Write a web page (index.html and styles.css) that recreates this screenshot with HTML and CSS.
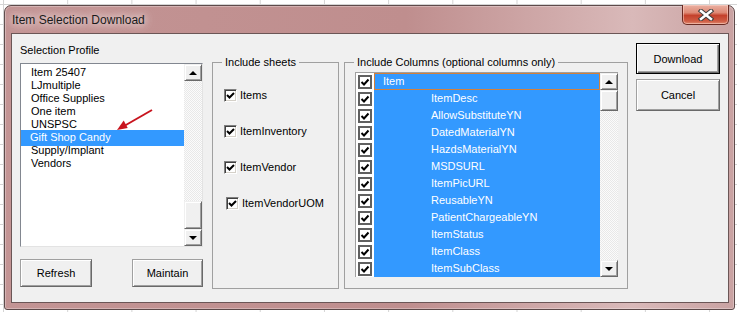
FILE: index.html
```html
<!DOCTYPE html>
<html lang="en">
<head>
  <meta charset="UTF-8">
  <title>Item Selection Download</title>
  <link rel="stylesheet" href="styles.css">
</head>
<body>
  <div class="window">
    <div class="titlebar">
      <span class="title">Item Selection Download</span>
      <button class="close" title="Close">
        <svg width="18" height="12" viewBox="0 0 18 12">
          <path d="M4 2 L14 10 M14 2 L4 10" stroke="#3c3c3c" stroke-width="4.5" stroke-linecap="square"/>
          <path d="M4 2 L14 10 M14 2 L4 10" stroke="#fff" stroke-width="2.5" stroke-linecap="square"/>
        </svg>
      </button>
    </div>

    <div class="client">
      <div class="profile">
        <div class="caption">Selection Profile</div>
        <div class="listbox">
          <ul class="profiles">
            <li>Item 25407</li>
            <li>LJmultiple</li>
            <li>Office Supplies</li>
            <li>One item</li>
            <li>UNSPSC</li>
            <li class="selected">Gift Shop Candy</li>
            <li>Supply/Implant</li>
            <li>Vendors</li>
          </ul>
          <div class="vscroll">
            <span class="sb-btn up"></span>
            <span class="sb-track"></span>
            <span class="sb-thumb tall"></span>
            <span class="sb-btn down"></span>
          </div>
          <svg class="pointer" width="50" height="36" viewBox="0 0 50 36">
            <line x1="42" y1="7" x2="15" y2="22.5" stroke="#c8141e" stroke-width="2"/>
            <polygon points="7,27 17.7,25 13.7,17.5" fill="#c8141e"/>
          </svg>
        </div>
        <div class="profile-actions">
          <button class="btn refresh">Refresh</button>
          <button class="btn maintain">Maintain</button>
        </div>
      </div>

      <fieldset class="frame sheets">
        <legend>Include sheets</legend>
        <div class="sheet-list">
          <label class="sheet"><span class="check"></span>Items</label>
          <label class="sheet"><span class="check"></span>ItemInventory</label>
          <label class="sheet"><span class="check"></span>ItemVendor</label>
          <label class="sheet shifted"><span class="check"></span>ItemVendorUOM</label>
        </div>
      </fieldset>

      <fieldset class="frame columns">
        <legend>Include Columns (optional columns only)</legend>
        <div class="col-wrap">
          <div class="col-list">
            <ul class="col-rows">
              <li class="parent focus"><span class="box"></span><span class="name">Item</span></li>
              <li><span class="box"></span><span class="name">ItemDesc</span></li>
              <li><span class="box"></span><span class="name">AllowSubstituteYN</span></li>
              <li><span class="box"></span><span class="name">DatedMaterialYN</span></li>
              <li><span class="box"></span><span class="name">HazdsMaterialYN</span></li>
              <li><span class="box"></span><span class="name">MSDSURL</span></li>
              <li><span class="box"></span><span class="name">ItemPicURL</span></li>
              <li><span class="box"></span><span class="name">ReusableYN</span></li>
              <li><span class="box"></span><span class="name">PatientChargeableYN</span></li>
              <li><span class="box"></span><span class="name">ItemStatus</span></li>
              <li><span class="box"></span><span class="name">ItemClass</span></li>
              <li><span class="box"></span><span class="name">ItemSubClass</span></li>
            </ul>
            <div class="vscroll">
              <span class="sb-btn up"></span>
              <span class="sb-thumb"></span>
              <span class="sb-track"></span>
              <span class="sb-btn down"></span>
            </div>
          </div>
        </div>
      </fieldset>

      <div class="actions">
        <button class="btn default">Download</button>
        <button class="btn cancel">Cancel</button>
      </div>
    </div>
  </div>
</body>
</html>
```

FILE: styles.css
```css
body {
  margin: 0;
  font: 11px "Liberation Sans", Arial, sans-serif;
  color: #000;
  background-color: #fff;
  background-image:
    linear-gradient(to right, #d4d4d4 1px, transparent 1px),
    linear-gradient(#d4d4d4 1px, transparent 1px);
  background-size: 64.2px 20px;
  background-position: 3px 4px;
  height: 312px;
  overflow: hidden;
}

/* window chrome */
.window {
  width: 731px;
  height: 305px;
  margin: 5px 0 0 4px;
  box-sizing: border-box;
  border: 1px solid #5e4a4a;
  border-radius: 7px 7px 3px 3px;
  background: linear-gradient(to right, #c39494 0%, #bf8e8e 55%, #d9b9b9 86%, #c9a2a2 100%);
  box-shadow: inset 0 0 0 1px rgba(255, 255, 255, .3);
  display: flex;
  flex-direction: column;
}
.titlebar {
  height: 27px;
  display: flex;
  align-items: center;
  justify-content: space-between;
  padding: 0 5px 0 7px;
}
.title {
  font-size: 12px;
  color: #1a1a1a;
  text-shadow: 0 0 6px #ead9d9, 0 0 10px #ead9d9, 0 0 14px #e2cccc;
}
.close {
  align-self: flex-start;
  margin-top: -1px;
  width: 47px;
  height: 20px;
  padding: 0;
  border: 1px solid #6a2a22;
  border-top: 0;
  border-radius: 0 0 5px 5px;
  background: linear-gradient(#eab0a2 0%, #de8a76 40%, #c4412c 55%, #cf5c44 85%, #e08a70 100%);
  box-shadow: inset 0 0 0 1px rgba(255, 220, 210, .5);
  display: flex;
  align-items: center;
  justify-content: center;
}
.client {
  flex: 1;
  margin: 0 5px 6px 6px;
  border: 1px solid #6b5656;
  background: #f0f0f0;
  display: flex;
  align-items: flex-start;
  padding: 0 8px;
}

/* shared controls */
.btn {
  font: inherit;
  color: #000;
  padding: 0;
  box-sizing: border-box;
  background: #f0f0f0;
  border: 1px solid #a0a0a0;
  border-right-color: #696969;
  border-bottom-color: #696969;
  box-shadow: inset 1px 1px #fff, inset -1px -1px #a0a0a0;
}
.vscroll {
  width: 18px;
  display: flex;
  flex-direction: column;
  flex-shrink: 0;
}
.sb-btn, .sb-thumb {
  box-sizing: border-box;
  background: #f0f0f0;
  border: 1px solid;
  border-color: #f0f0f0 #696969 #696969 #f0f0f0;
  box-shadow: inset 1px 1px #fff, inset -1px -1px #a0a0a0;
}
.sb-btn {
  height: 17px;
  display: flex;
  align-items: center;
  justify-content: center;
}
.sb-btn.up::after {
  content: "";
  border: 4px solid transparent;
  border-top: 0;
  border-bottom: 4px solid #000;
}
.sb-btn.down::after {
  content: "";
  border: 4px solid transparent;
  border-bottom: 0;
  border-top: 4px solid #000;
}
.sb-thumb { height: 21px; }
.sb-thumb.tall { height: 28px; }
.sb-track {
  flex: 1;
  background: repeating-conic-gradient(#e8e8e8 0 25%, #fbfbfb 0 50%) 0 0 / 2px 2px;
}

/* selection profile */
.profile {
  width: 183px;
  margin-top: 10px;
}
.caption { line-height: 13px; }
.listbox {
  position: relative;
  margin-top: 6px;
  height: 184px;
  box-sizing: border-box;
  background: #fff;
  border: 1px solid #828790;
  border-right-color: #e3e3e3;
  border-bottom-color: #e3e3e3;
  display: flex;
}
.profiles {
  flex: 1;
  list-style: none;
  margin: 0;
  padding: 2px 0 0;
}
.profiles li {
  height: 13px;
  line-height: 13px;
  padding-left: 10px;
}
.profiles li.selected {
  background: #3399ff;
  color: #fff;
  padding-left: 9px;
  box-shadow: 0 -1px 0 #3399ff, 0 2px 0 #3399ff;
}
.pointer {
  position: absolute;
  left: 89px;
  top: 39px;
}
.profile-actions {
  margin-top: 12px;
  display: flex;
  justify-content: space-between;
}
.profile-actions .btn { height: 28px; }
.refresh { width: 72px; }
.maintain { width: 71px; }

/* frames */
.frame {
  margin: 22px 0 0;
  padding: 0;
  min-width: 0;
  border: 1px solid #a0a0a0;
  box-sizing: border-box;
}
.frame legend {
  margin-left: 9px;
  padding: 0 3px;
  line-height: 12px;
}
.sheets { width: 127px; margin-left: 9px; }
.columns { width: 284px; margin-left: 5px; }

.sheet-list {
  height: 220px;
  padding: 20px 0 0 11px;
  box-sizing: border-box;
  display: flex;
  flex-direction: column;
  gap: 22px;
}
.sheet {
  display: flex;
  align-items: center;
  height: 14px;
  gap: 3px;
}
.sheet.shifted { padding-left: 2px; }
.check {
  width: 13px;
  height: 13px;
  box-sizing: border-box;
  background: #fff url("data:image/svg+xml,%3Csvg xmlns='http://www.w3.org/2000/svg' width='11' height='11'%3E%3Cpath d='M2 5 L4.5 7.5 L9 3' fill='none' stroke='%23000' stroke-width='2'/%3E%3C/svg%3E") center / 11px 11px no-repeat;
  border: 1px solid;
  border-color: #808080 #fff #fff #808080;
  box-shadow: inset 1px 1px #404040, inset -1px -1px #d4d0c8;
}

.col-wrap {
  height: 220px;
  padding: 4px 0 0 10px;
  box-sizing: border-box;
}
.col-list {
  width: 263px;
  height: 205px;
  box-sizing: border-box;
  border-top: 1px solid #a0a0a0;
  border-left: 1px solid #a0a0a0;
  display: flex;
}
.col-rows {
  flex: 1;
  list-style: none;
  margin: 0;
  padding: 0;
}
.col-rows li {
  display: flex;
  height: 17px;
}
.col-rows .box {
  width: 18px;
  background: #fff url("data:image/svg+xml,%3Csvg xmlns='http://www.w3.org/2000/svg' width='14' height='14'%3E%3Crect x='1' y='1' width='12' height='12' fill='%23fff' stroke='%23606060' stroke-width='2'/%3E%3Cpath d='M3.5 7 L6 9.5 L10.5 4.5' fill='none' stroke='%23000' stroke-width='2'/%3E%3C/svg%3E") 2px 2px / 14px 14px no-repeat;
}
.col-rows .name {
  flex: 1;
  background: #3399ff;
  color: #fff;
  line-height: 17px;
  padding-left: 57px;
}
.col-rows .parent .name { padding-left: 9px; }
.col-rows .focus .name { box-shadow: inset 0 0 0 1px #d4803a; }

/* dialog buttons */
.actions {
  width: 84px;
  margin: 9px 0 0 8px;
  display: flex;
  flex-direction: column;
  gap: 5px;
}
.actions .btn { height: 32px; }
.btn.default {
  height: 31px;
  border: 1px solid #000;
  box-shadow: inset 1px 1px #fff, inset -1px -1px #696969, inset -2px -2px #a0a0a0;
}
```
